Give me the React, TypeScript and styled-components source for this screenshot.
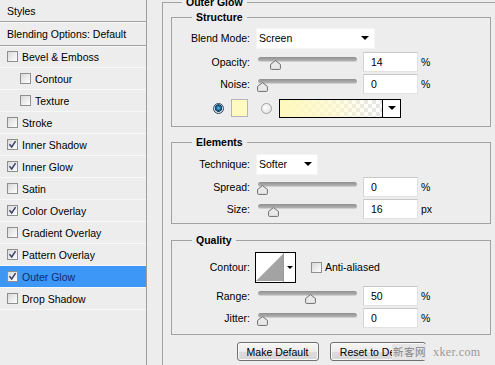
import React from "react";
import styled, { createGlobalStyle } from "styled-components";

const GlobalStyle = createGlobalStyle`
  html, body {
    margin: 0;
    padding: 0;
  }
  body {
    background: #ededed;
    font-family: "Liberation Sans", Arial, sans-serif;
    font-size: 10.5px;
    color: #000;
  }
`;

const Window = styled.div`
  position: relative;
  display: flex;
  width: 495px;
  height: 365px;
  overflow: hidden;
  background: #ededed;
`;

/* ---------- left list ---------- */

const Sidebar = styled.div`
  flex: none;
  width: 147px;
  box-sizing: border-box;
  border-right: 1px solid #9d9d9d;
  display: flex;
  flex-direction: column;
`;

const SideHeader = styled.div<{ $h: number }>`
  height: ${(p) => p.$h}px;
  box-sizing: border-box;
  padding-left: 7px;
  display: flex;
  align-items: center;
  border-bottom: 1px solid #a3a3a3;
  box-shadow: 0 1px 0 #fafafa;
`;

const StyleRow = styled.div<{ $indent?: boolean; $active?: boolean }>`
  height: 22px;
  box-sizing: border-box;
  display: flex;
  align-items: center;
  gap: 4px;
  padding-left: ${(p) => (p.$indent ? 20 : 7)}px;
  border-bottom: 1px solid #f8f8f8;
  background: ${(p) => (p.$active ? "#3d97f7" : "transparent")};
  color: ${(p) => (p.$active ? "#0d2a72" : "#000")};
`;

const Box = styled.span`
  flex: none;
  width: 11px;
  height: 11px;
  box-sizing: border-box;
  border: 1px solid #8e8f8f;
  background: linear-gradient(135deg, #d9d9d9, #ffffff);
  display: flex;
  align-items: center;
  justify-content: center;
`;

const Check = ({ on }: { on?: boolean }) => (
  <Box>
    {on && (
      <svg width="9" height="9" viewBox="0 0 9 9">
        <path d="M1.5 4.2 L3.7 7 L7.6 1.2" fill="none" stroke="#3b3f6b" strokeWidth="1.5" />
      </svg>
    )}
  </Box>
);

/* ---------- right side ---------- */

const Main = styled.div`
  flex: none;
  padding-left: 15px;
`;

const Outer = styled.fieldset`
  margin: -5px 0 0 0;
  padding: 0 8px;
  width: 345px;
  height: 380px;
  box-sizing: border-box;
  border: 1px solid #a2a2a2;
  min-width: 0;
`;

const Group = styled.fieldset<{ $top: number; $pt: number; $pb: number }>`
  margin: ${(p) => p.$top}px 0 0 0;
  padding: ${(p) => p.$pt}px 0 ${(p) => p.$pb}px 0;
  width: 320px;
  box-sizing: border-box;
  border: 1px solid #a2a2a2;
  min-width: 0;
`;

const Legend = styled.legend<{ $ml: number }>`
  margin-left: ${(p) => p.$ml}px;
  padding: 0 4px;
  height: 14px;
  line-height: 14px;
  font-weight: bold;
`;

const Row = styled.div<{ $mt?: number; $h?: number }>`
  display: flex;
  align-items: center;
  height: ${(p) => p.$h ?? 22}px;
  margin-top: ${(p) => p.$mt ?? 0}px;
`;

const Label = styled.span`
  flex: none;
  width: 78px;
  text-align: right;
  margin-right: 6px;
`;

const Select = styled.div<{ $w: number }>`
  width: ${(p) => p.$w}px;
  height: 21px;
  box-sizing: border-box;
  background: #fff;
  border: 1px solid #f4f4f4;
  display: flex;
  align-items: center;
  justify-content: space-between;
  padding: 0 5px 0 2px;
`;

const Caret = styled.span`
  width: 0;
  height: 0;
  border-left: 4px solid transparent;
  border-right: 4px solid transparent;
  border-top: 4px solid #000;
`;

const SliderBox = styled.div`
  position: relative;
  flex: none;
  width: 103px;
  height: 22px;
`;

const Track = styled.div`
  margin: 6px 0 0 2px;
  width: 99px;
  height: 5px;
  box-sizing: border-box;
  border-radius: 3px;
  background: linear-gradient(#8f8f8f, #b4b4b4);
  border-bottom: 1px solid #d0d0d0;
`;

const Thumb = styled.svg`
  position: absolute;
  top: 9px;
`;

const Slider = ({ value }: { value: number }) => (
  <SliderBox>
    <Track />
    <Thumb width="11" height="10" viewBox="0 0 11 10" style={{ left: 0.5 + value * 0.97 }}>
      <path
        d="M5.5 0.6 L10.4 4.4 L10.4 8.6 Q10.4 9.4 9.6 9.4 L1.4 9.4 Q0.6 9.4 0.6 8.6 L0.6 4.4 Z"
        fill="#e9e9e9"
        stroke="#6e6e6e"
        strokeWidth="1"
      />
    </Thumb>
  </SliderBox>
);

const Field = styled.div`
  flex: none;
  margin-left: 4px;
  width: 55px;
  height: 20px;
  box-sizing: border-box;
  background: #fff;
  border: 1px solid #e2e2e2;
  border-top-color: #c8c8c8;
  border-left-color: #d4d4d4;
  padding-left: 7px;
  display: flex;
  align-items: center;
`;

const Unit = styled.span`
  margin-left: 3px;
`;

const Radio = styled.span<{ $on?: boolean }>`
  flex: none;
  width: 11px;
  height: 11px;
  box-sizing: border-box;
  border-radius: 50%;
  border: 1px solid ${(p) => (p.$on ? "#2f4a66" : "#a0a0a0")};
  background: ${(p) =>
    p.$on
      ? "radial-gradient(circle at 50% 45%, #6ec3e6 0, #1b6c9c 2px, #123a5c 3.5px, #d4dde6 4px)"
      : "radial-gradient(circle at 40% 40%, #ffffff, #dcdcdc)"};
`;

const Swatch = styled.span`
  flex: none;
  width: 17px;
  height: 18px;
  box-sizing: border-box;
  border: 1px solid #b5b5b5;
  background: #fff9c2;
`;

const GradientBox = styled.div`
  flex: none;
  width: 122px;
  height: 19px;
  box-sizing: border-box;
  border: 1px solid #000;
  display: flex;
  background:
    linear-gradient(to right, #fff8bd 0%, rgba(255, 249, 200, 0.7) 45%, rgba(255, 255, 255, 0) 80%),
    repeating-conic-gradient(#e6e6e6 0% 25%, #ffffff 0% 50%) 0 0 / 8px 8px;
`;

const GradientFill = styled.span`
  flex: 1;
`;

const DropPart = styled.span`
  flex: none;
  width: 17px;
  border-left: 1px solid #000;
  background: #fff;
  display: flex;
  align-items: center;
  justify-content: center;
`;

const ContourBox = styled.div`
  flex: none;
  margin-left: -1px;
  width: 41px;
  height: 31px;
  box-sizing: border-box;
  border: 1px solid #000;
  display: flex;
  background: #fff;
`;

const ContourArrow = styled.span`
  flex: none;
  width: 11px;
  display: flex;
  align-items: center;
  justify-content: center;
  border-left: 1px solid #9a9a9a;
`;

const SmallCaret = styled(Caret)`
  border-left-width: 3px;
  border-right-width: 3px;
  border-top-width: 3px;
`;

const CheckLabel = styled.label`
  display: flex;
  align-items: center;
  gap: 3px;
  margin-left: 15px;
`;

const Buttons = styled.div`
  width: 320px;
  margin-top: 7px;
  display: flex;
  justify-content: center;
  gap: 11px;
`;

const Button = styled.button<{ $w: number }>`
  width: ${(p) => p.$w}px;
  height: 19px;
  padding: 0;
  font: inherit;
  color: #000;
  border: 1px solid #707070;
  border-radius: 3px;
  background: linear-gradient(#f7f7f7 0%, #ececec 50%, #dcdcdc 51%, #d6d6d6 100%);
  box-shadow: inset 0 0 0 1px #fbfbfb;
`;

const Watermark = styled.div`
  position: absolute;
  left: 392px;
  top: 344px;
  display: flex;
  align-items: center;
  gap: 7px;
  height: 16px;
`;

const WaterCn = styled.span`
  font-family: "Noto Sans CJK SC", sans-serif;
  font-size: 10.5px;
  letter-spacing: 0.5px;
  padding-left: 1px;
  color: #858585;
  background: #e6e6e6;
  line-height: 16px;
`;

const WaterEn = styled.span`
  font-family: "Liberation Serif", "Times New Roman", serif;
  font-size: 12px;
  letter-spacing: 0.4px;
  color: #9a9a9a;
`;

const styleItems: { name: string; on?: boolean; indent?: boolean; active?: boolean }[] = [
  { name: "Bevel & Emboss" },
  { name: "Contour", indent: true },
  { name: "Texture", indent: true },
  { name: "Stroke" },
  { name: "Inner Shadow", on: true },
  { name: "Inner Glow", on: true },
  { name: "Satin" },
  { name: "Color Overlay", on: true },
  { name: "Gradient Overlay" },
  { name: "Pattern Overlay", on: true },
  { name: "Outer Glow", on: true, active: true },
  { name: "Drop Shadow" },
];

const SliderRow = ({
  label,
  value,
  text,
  unit,
  mt,
}: {
  label: string;
  value: number;
  text: string;
  unit: string;
  mt?: number;
}) => (
  <Row $mt={mt}>
    <Label>{label}</Label>
    <Slider value={value} />
    <Field>{text}</Field>
    <Unit>{unit}</Unit>
  </Row>
);

export default function App() {
  return (
    <>
      <GlobalStyle />
      <Window>
        <Sidebar>
          <SideHeader $h={22}>Styles</SideHeader>
          <SideHeader $h={24}>Blending Options: Default</SideHeader>
          {styleItems.map((s) => (
            <StyleRow key={s.name} $indent={s.indent} $active={s.active}>
              <Check on={s.on} />
              {s.name}
            </StyleRow>
          ))}
        </Sidebar>

        <Main>
          <Outer>
            <Legend $ml={11}>Outer Glow</Legend>

            <Group $top={1} $pt={3} $pb={7}>
              <Legend $ml={20}>Structure</Legend>
              <Row>
                <Label>Blend Mode:</Label>
                <Select $w={119}>
                  Screen
                  <Caret />
                </Select>
              </Row>
              <SliderRow label="Opacity:" value={14} text="14" unit="%" mt={2} />
              <SliderRow label="Noise:" value={0} text="0" unit="%" />
              <Row $mt={2}>
                <Radio $on style={{ marginLeft: 41 }} />
                <Swatch style={{ marginLeft: 7 }} />
                <Radio style={{ marginLeft: 13 }} />
                <GradientBox style={{ marginLeft: 7 }}>
                  <GradientFill />
                  <DropPart>
                    <Caret />
                  </DropPart>
                </GradientBox>
              </Row>
            </Group>

            <Group $top={8} $pt={4} $pb={3}>
              <Legend $ml={20}>Elements</Legend>
              <Row>
                <Label>Technique:</Label>
                <Select $w={62}>
                  Softer
                  <Caret />
                </Select>
              </Row>
              <SliderRow label="Spread:" value={0} text="0" unit="%" mt={1} />
              <SliderRow label="Size:" value={12} text="16" unit="px" />
            </Group>

            <Group $top={9} $pt={4} $pb={5}>
              <Legend $ml={20}>Quality</Legend>
              <Row $h={32}>
                <Label>Contour:</Label>
                <ContourBox>
                  <svg width="29" height="29" viewBox="0 0 29 29">
                    <polygon points="0,29 29,0 29,29" fill="#a3a3a3" />
                  </svg>
                  <ContourArrow>
                    <SmallCaret />
                  </ContourArrow>
                </ContourBox>
                <CheckLabel>
                  <Check />
                  Anti-aliased
                </CheckLabel>
              </Row>
              <SliderRow label="Range:" value={50} text="50" unit="%" mt={2} />
              <SliderRow label="Jitter:" value={0} text="0" unit="%" />
            </Group>

            <Buttons>
              <Button $w={82}>Make Default</Button>
              <Button $w={96}>Reset to Default</Button>
            </Buttons>
          </Outer>
        </Main>

        <Watermark>
          <WaterCn>新客网</WaterCn>
          <WaterEn>xker.com</WaterEn>
        </Watermark>
      </Window>
    </>
  );
}
